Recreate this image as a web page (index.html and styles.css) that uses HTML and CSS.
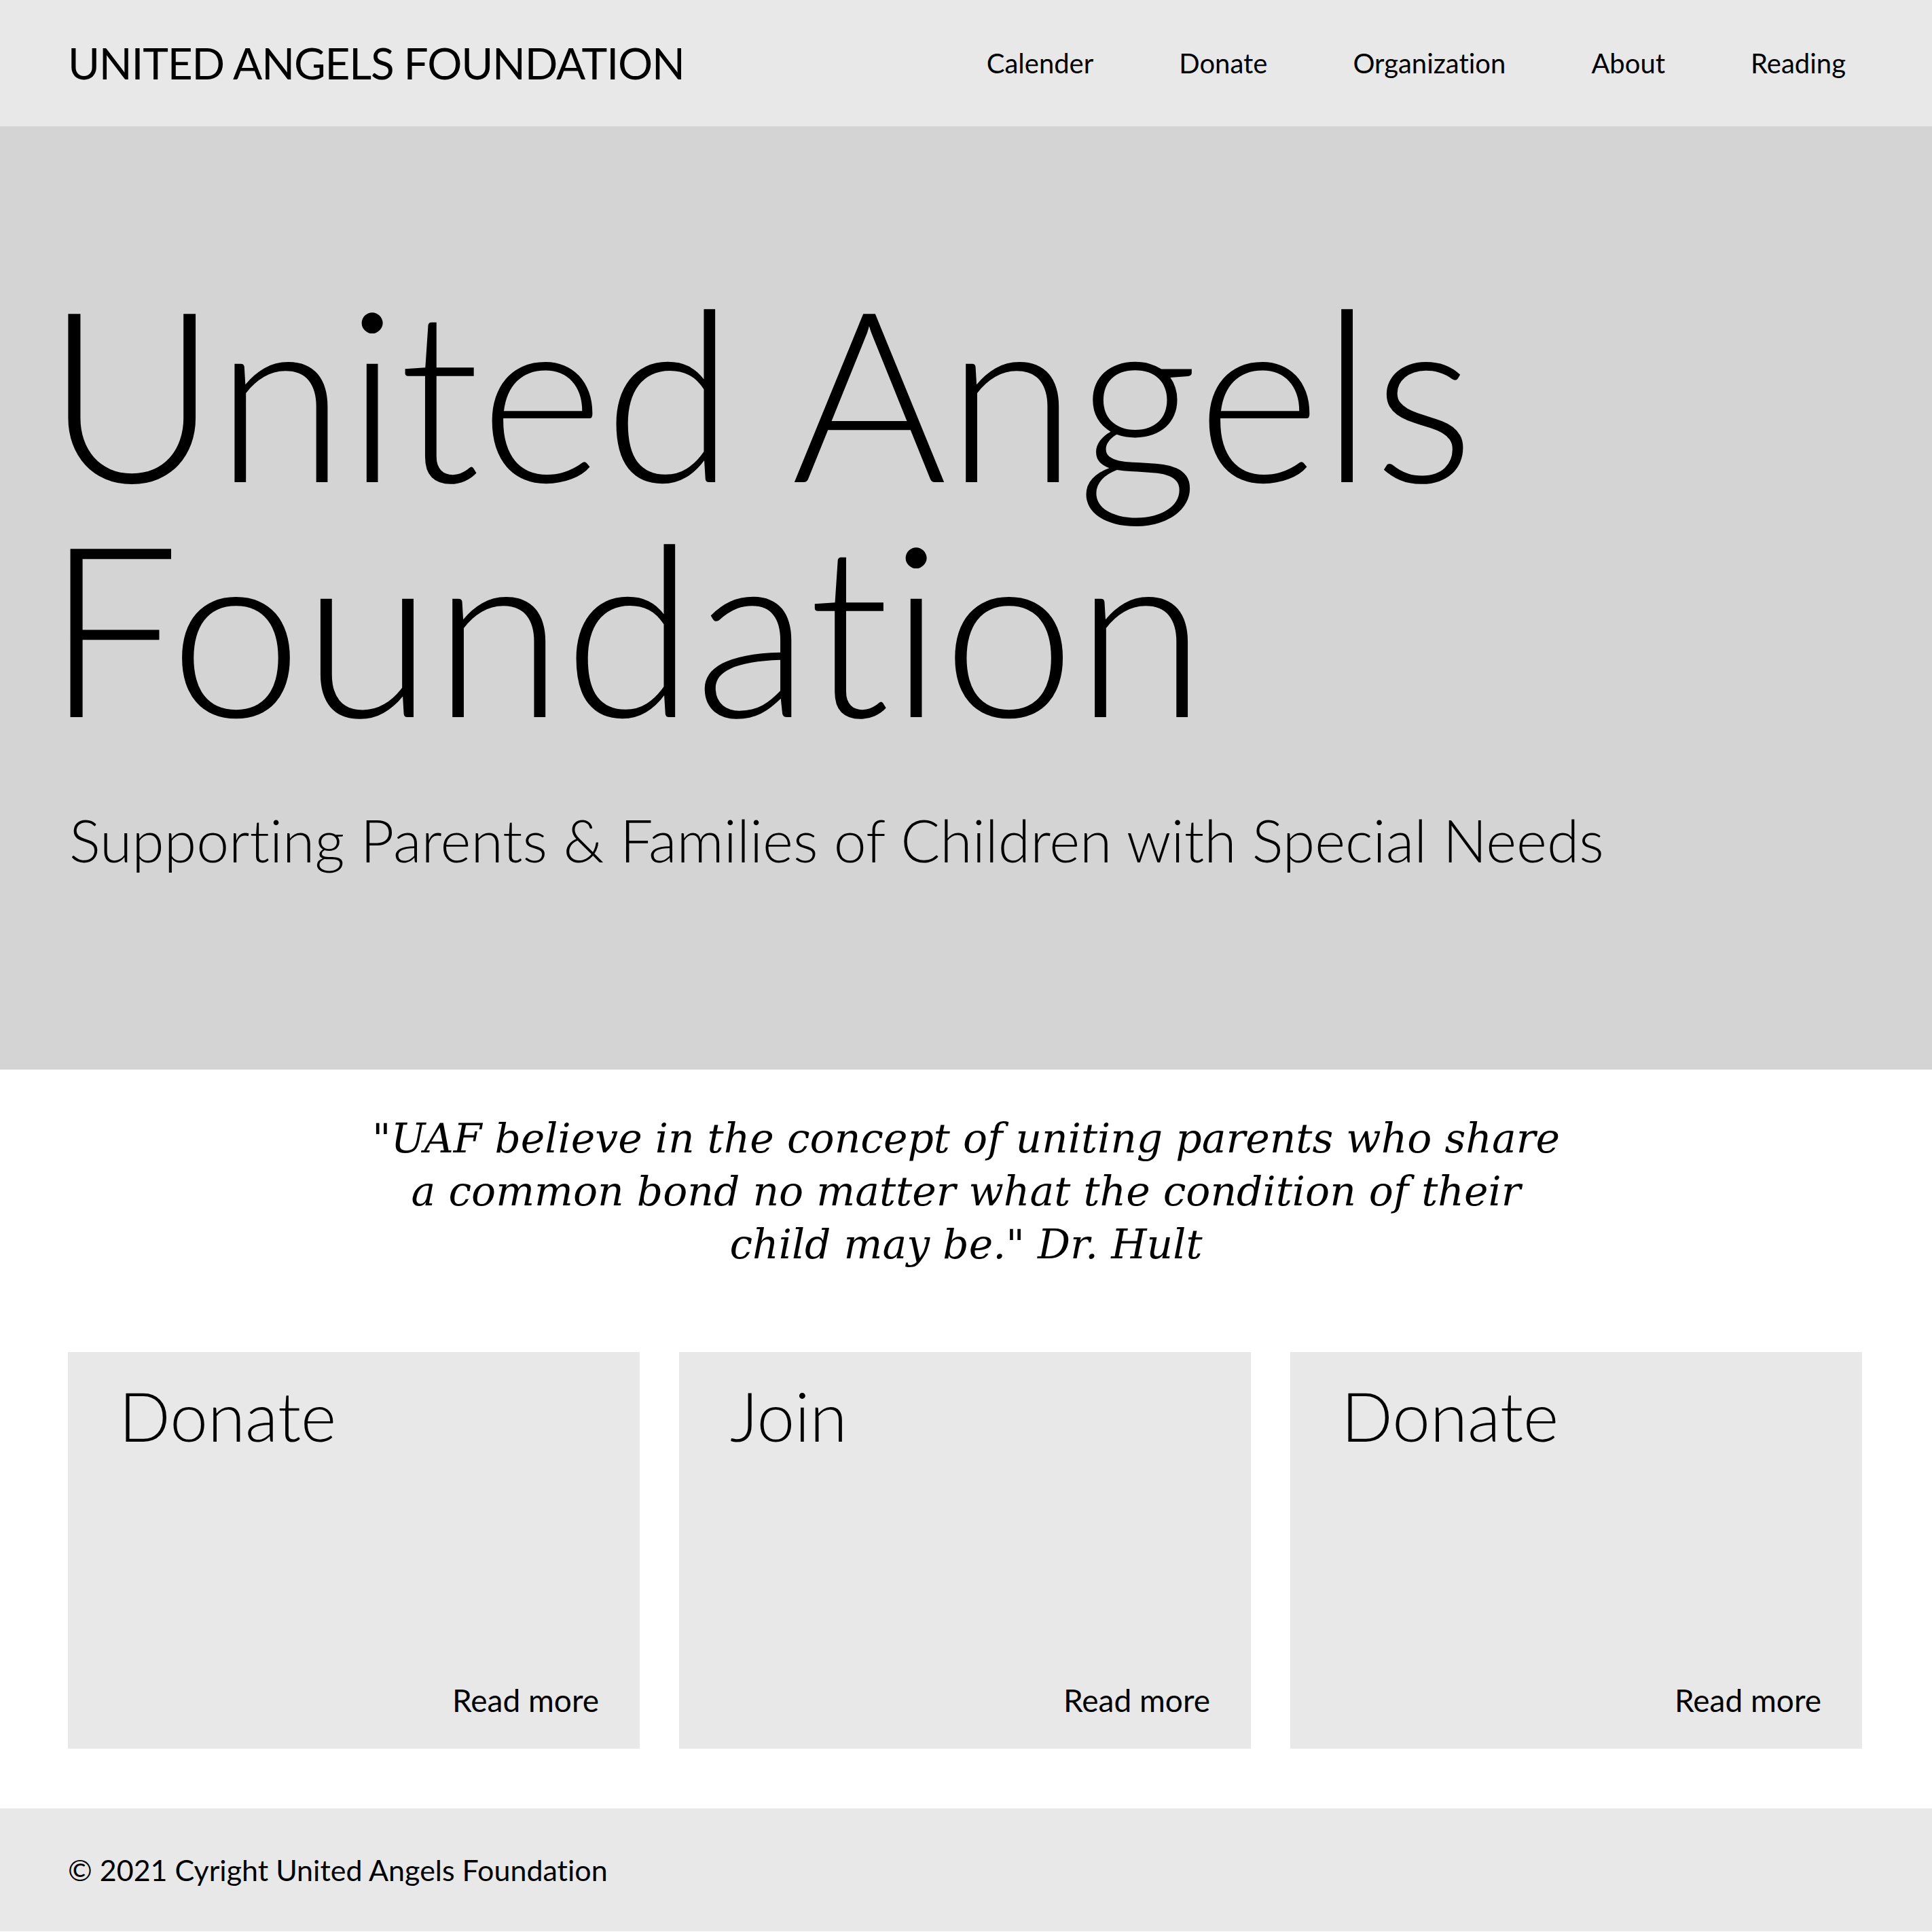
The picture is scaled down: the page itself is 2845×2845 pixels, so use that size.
FILE: index.html
```html
<!DOCTYPE html>
<html lang="en">
<head>
<meta charset="utf-8">
<title>United Angels Foundation</title>
<link rel="stylesheet" href="styles.css">
</head>
<body>
<header class="site-header">
  <div class="brand">UNITED ANGELS FOUNDATION</div>
  <nav class="nav">
    <a href="#">Calender</a>
    <a href="#">Donate</a>
    <a href="#">Organization</a>
    <a href="#">About</a>
    <a href="#">Reading</a>
  </nav>
</header>
<section class="hero">
  <h1 class="hero-title">United Angels<br>Foundation</h1>
  <p class="hero-sub">Supporting Parents &amp; Families of Children with Special Needs</p>
</section>
<section class="quote-wrap">
  <p class="quote">"UAF believe in the concept of uniting parents who share a common bond no matter what the condition of their child may be." Dr. Hult</p>
</section>
<section class="cards">
  <div class="card">
    <h2 class="card-title">Donate</h2>
    <a class="card-link" href="#">Read more</a>
  </div>
  <div class="card">
    <h2 class="card-title">Join</h2>
    <a class="card-link" href="#">Read more</a>
  </div>
  <div class="card">
    <h2 class="card-title">Donate</h2>
    <a class="card-link" href="#">Read more</a>
  </div>
</section>
<footer class="site-footer">
  <p class="copy">© 2021 Cyright United Angels Foundation</p>
</footer>
</body>
</html>
```
FILE: styles.css
```css
* { box-sizing: border-box; }
html, body { margin: 0; padding: 0; }
body {
  font-family: Lato, "Open Sans", sans-serif;
  font-variant-ligatures: none;
  color: #000;
  background: #fff;
}
a { color: #000; text-decoration: none; }

.site-header {
  height: 186px;
  background: #e8e8e8;
  display: flex;
  align-items: center;
  justify-content: space-between;
  padding: 0 127px 0 100px;
}
.brand {
  font-size: 64px;
  font-weight: 400;
  letter-spacing: -1.2px;
  line-height: 1;
}
.nav {
  display: flex;
  gap: 126px;
}
.nav a {
  font-size: 40px;
  line-height: 1;
}

.hero {
  background: #d4d4d4;
  height: 1389px;
  padding: 216px 100px 0 67px;
}
.hero-title {
  margin: 0;
  font-size: 350px;
  font-weight: 300;
  line-height: 346px;
}
.hero-sub {
  margin: 91px 0 0 35px;
  font-size: 86px;
  font-weight: 300;
  line-height: 1.2;
}

.quote-wrap {
  padding: 62px 0 0;
  display: flex;
  justify-content: center;
}
.quote {
  margin: 0;
  width: 1760px;
  text-align: center;
  font-family: "DejaVu Serif", serif;
  font-style: italic;
  font-size: 60px;
  line-height: 78px;
}

.cards {
  display: grid;
  grid-template-columns: repeat(3, 1fr);
  gap: 58px;
  padding: 120px 103px 0 100px;
}
.card {
  background: #e8e8e8;
  height: 584px;
  padding: 33px 60px 44px 75px;
  display: flex;
  flex-direction: column;
  justify-content: space-between;
}
.card-title {
  margin: 0;
  font-size: 100px;
  font-weight: 300;
  line-height: 1.2;
}
.card-link {
  align-self: flex-end;
  font-size: 46px;
  line-height: 1.2;
}

.site-footer {
  margin-top: 88px;
  height: 181px;
  background: #e8e8e8;
  display: flex;
  align-items: center;
  padding: 0 100px;
}
.copy {
  margin: 0;
  font-size: 43px;
  line-height: 1;
}
```
